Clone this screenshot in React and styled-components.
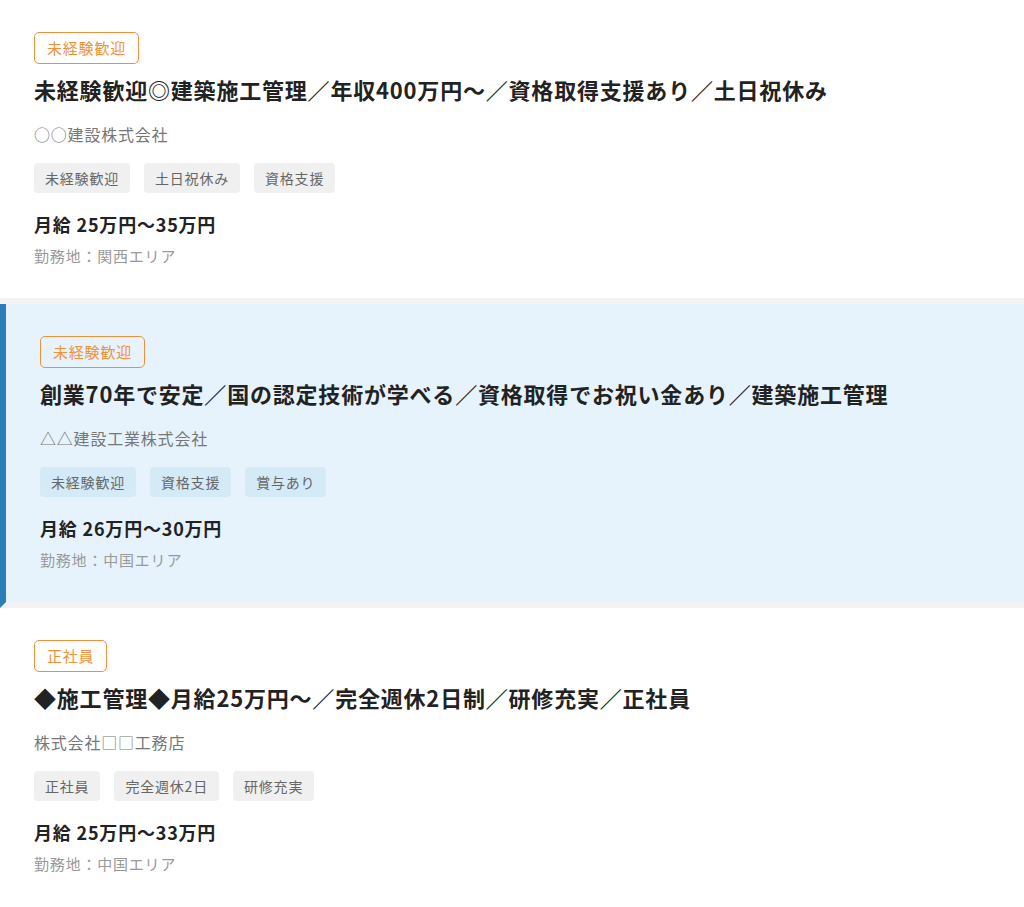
import React from "react";
import styled, { createGlobalStyle } from "styled-components";

const GlobalStyle = createGlobalStyle`
  * { box-sizing: border-box; }
  body {
    margin: 0;
    background: #fff;
    font-family: "Noto Sans CJK JP", "Noto Sans", sans-serif;
    letter-spacing: 0.05em;
  }
`;

const jobs = [
  {
    label: "未経験歓迎",
    title: "未経験歓迎◎建築施工管理／年収400万円〜／資格取得支援あり／土日祝休み",
    company: "○○建設株式会社",
    tags: ["未経験歓迎", "土日祝休み", "資格支援"],
    salary: "月給 25万円〜35万円",
    area: "勤務地：関西エリア",
  },
  {
    label: "未経験歓迎",
    title: "創業70年で安定／国の認定技術が学べる／資格取得でお祝い金あり／建築施工管理",
    company: "△△建設工業株式会社",
    tags: ["未経験歓迎", "資格支援", "賞与あり"],
    salary: "月給 26万円〜30万円",
    area: "勤務地：中国エリア",
    active: true,
  },
  {
    label: "正社員",
    title: "◆施工管理◆月給25万円〜／完全週休2日制／研修充実／正社員",
    company: "株式会社□□工務店",
    tags: ["正社員", "完全週休2日", "研修充実"],
    salary: "月給 25万円〜33万円",
    area: "勤務地：中国エリア",
  },
];

const List = styled.ul`
  list-style: none;
  margin: 0;
  padding: 0;
`;

const Card = styled.li`
  padding: 32px 34px 31px;
  border-bottom: 6px solid #f3f3f3;
  border-left: ${(p) => (p.$active ? "6px solid #2a7fb9" : "0")};
  background: ${(p) => (p.$active ? "#e6f3fc" : "#fff")};
  &:last-child { border-bottom: 0; }
`;

const Label = styled.span`
  display: inline-block;
  height: 32px;
  padding: 0 12px;
  border: 1.5px solid #f0913a;
  border-radius: 5px;
  color: #f0913a;
  font-size: 15px;
  line-height: 29px;
`;

const Title = styled.h2`
  margin: 9px 0 0;
  font-size: 22px;
  line-height: 33px;
  font-weight: 700;
  color: #222;
`;

const Company = styled.p`
  margin: 16px 0 0;
  font-size: 16px;
  line-height: 24px;
  color: #777;
`;

const Tags = styled.div`
  display: flex;
  gap: 14px;
  margin-top: 17px;
`;

const Tag = styled.span`
  height: 30px;
  padding: 0 11px;
  border-radius: 4px;
  background: ${(p) => (p.$active ? "#d4eaf7" : "#f0f0f0")};
  color: #666;
  font-size: 14px;
  line-height: 30px;
`;

const Salary = styled.p`
  margin: 18px 0 0;
  font-size: 18px;
  line-height: 27px;
  font-weight: 700;
  color: #222;
`;

const Area = styled.p`
  margin: 7px 0 0;
  font-size: 15px;
  line-height: 22px;
  color: #999;
`;

export default function App() {
  return (
    <>
      <GlobalStyle />
      <List>
        {jobs.map((job, i) => (
          <Card key={i} $active={job.active}>
            <Label>{job.label}</Label>
            <Title>{job.title}</Title>
            <Company>{job.company}</Company>
            <Tags>
              {job.tags.map((t) => (
                <Tag key={t} $active={job.active}>{t}</Tag>
              ))}
            </Tags>
            <Salary>{job.salary}</Salary>
            <Area>{job.area}</Area>
          </Card>
        ))}
      </List>
    </>
  );
}
